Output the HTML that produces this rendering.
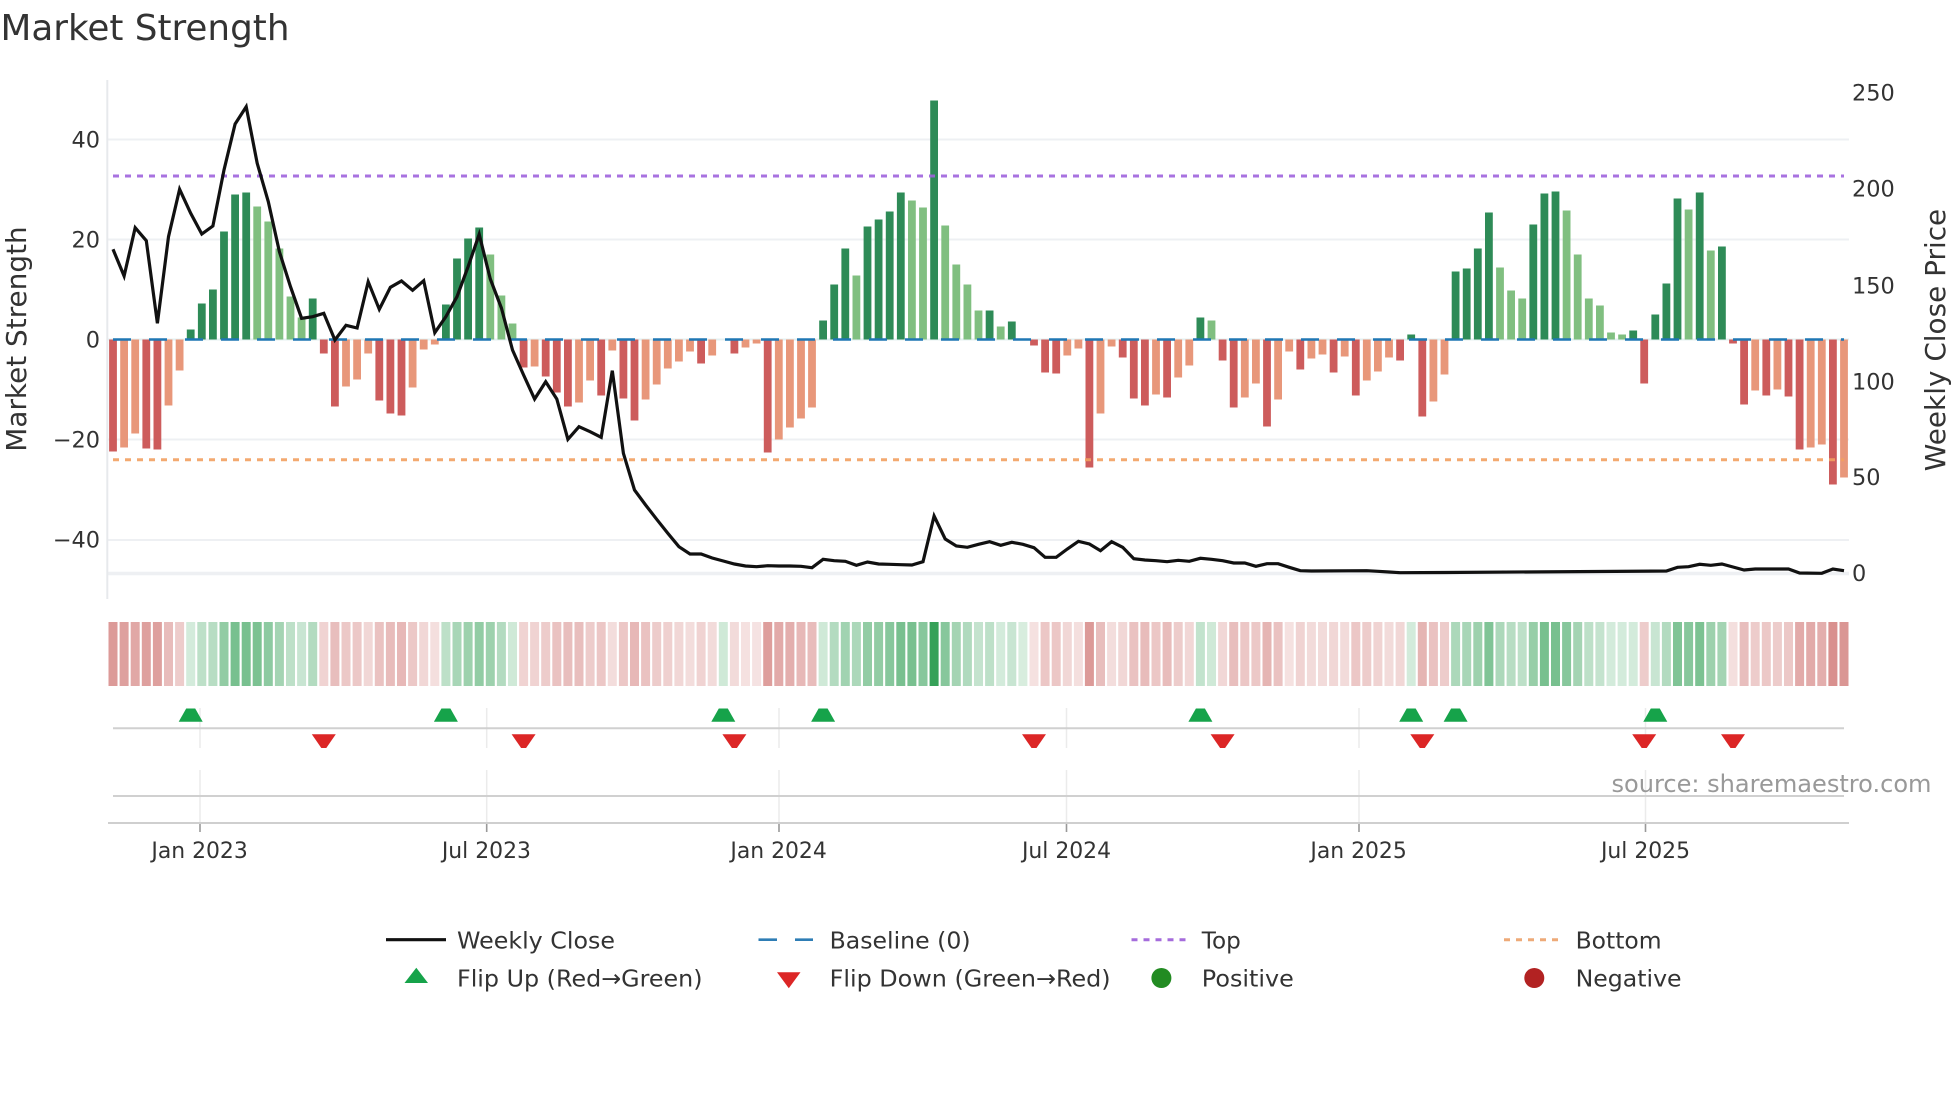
<!DOCTYPE html>
<html>
<head>
<meta charset="utf-8">
<title>Market Strength</title>
<style>
html,body{margin:0;padding:0;background:#fff;width:1960px;height:1102px;overflow:hidden}
svg{display:block}
text{font-family:"DejaVu Sans","Liberation Sans",sans-serif;fill:#333}
</style>
</head>
<body>
<svg width="1960" height="1102" viewBox="0 0 1960 1102" xmlns="http://www.w3.org/2000/svg">
<rect width="1960" height="1102" fill="#fff"/>
<defs>
<polygon id="u" points="-12,721.7 12,721.7 4.5,708.5 -4.5,708.5" fill="#16a34a"/>
<polygon id="d" points="-12,734.3 12,734.3 2.5,748 -2.5,748" fill="#dc2626"/>
</defs>

<text x="0.5" y="40" font-size="35.5" textLength="289" lengthAdjust="spacingAndGlyphs">Market Strength</text>

<!-- grid -->
<g stroke="#eef0f3" stroke-width="2" fill="none">
<path d="M107 139.5H1849M107 239.5H1849M107 439.5H1849M107 540H1849"/>
<path d="M107 339.5H1849" stroke="#e4f0f2"/>
<path d="M107 573.5H1849" stroke-width="3.6"/>
<path d="M107.3 80V599" stroke="#e7e9ec"/>
</g>

<!-- bars -->
<g fill="none" stroke-width="7.8">
<path stroke="#2e8b57" d="M190.7 339.5v-10M201.8 339.5v-36M212.9 339.5v-50M224 339.5v-108M235.1 339.5v-145M246.2 339.5v-147M312.7 339.5v-41M445.9 339.5v-35M457 339.5v-81M468.1 339.5v-101M479.2 339.5v-112M823.1 339.5v-19M834.2 339.5v-55M845.3 339.5v-91M867.5 339.5v-113M878.6 339.5v-120M889.7 339.5v-128M900.8 339.5v-147M934.1 339.5v-239M989.6 339.5v-29M1011.8 339.5v-18M1200.4 339.5v-22M1411.2 339.5v-5M1455.6 339.5v-68M1466.7 339.5v-71M1477.8 339.5v-91M1488.9 339.5v-127M1533.3 339.5v-115M1544.4 339.5v-146M1555.5 339.5v-148M1633.2 339.5v-9M1655.3 339.5v-25M1666.4 339.5v-56M1677.5 339.5v-141M1699.7 339.5v-147M1721.9 339.5v-93"/>
<path stroke="#80bf80" d="M257.2 339.5v-133M268.3 339.5v-118M279.4 339.5v-91M290.5 339.5v-43M301.6 339.5v-22M490.3 339.5v-85M501.4 339.5v-44M512.5 339.5v-16M856.4 339.5v-64M911.9 339.5v-139M923 339.5v-132M945.2 339.5v-114M956.3 339.5v-75M967.4 339.5v-55M978.5 339.5v-29M1000.7 339.5v-13M1211.5 339.5v-19M1500 339.5v-72M1511.1 339.5v-49M1522.2 339.5v-41M1566.6 339.5v-129M1577.7 339.5v-85M1588.8 339.5v-41M1599.9 339.5v-34M1611 339.5v-7M1622.1 339.5v-5M1688.6 339.5v-130M1710.8 339.5v-89"/>
<path stroke="#cd5c5c" d="M113 339.5v112M146.3 339.5v109M157.4 339.5v110M323.8 339.5v14M334.9 339.5v67M379.3 339.5v61M390.4 339.5v74M401.5 339.5v76M523.6 339.5v28M545.7 339.5v37M556.8 339.5v53M567.9 339.5v67M601.2 339.5v56M623.4 339.5v59M634.5 339.5v81M701.1 339.5v24M734.4 339.5v14M767.7 339.5v113M1034 339.5v6M1045.1 339.5v33M1056.2 339.5v34M1089.4 339.5v128M1122.7 339.5v18M1133.8 339.5v59M1144.9 339.5v66M1167.1 339.5v58M1222.6 339.5v21M1233.7 339.5v68M1267 339.5v87M1300.3 339.5v30M1333.6 339.5v33M1355.8 339.5v56M1400.1 339.5v21M1422.3 339.5v77M1644.2 339.5v44M1733 339.5v4M1744.1 339.5v65M1766.3 339.5v56M1788.5 339.5v57M1799.6 339.5v110M1832.9 339.5v145"/>
<path stroke="#e8977a" d="M124.1 339.5v108M135.2 339.5v94M168.5 339.5v66M179.6 339.5v31M346 339.5v47M357.1 339.5v40M368.2 339.5v14M412.6 339.5v48M423.7 339.5v10M434.8 339.5v5M534.6 339.5v27M579 339.5v63M590.1 339.5v41M612.3 339.5v11M645.6 339.5v60M656.7 339.5v45M667.8 339.5v29M678.9 339.5v22M690 339.5v12M712.2 339.5v16M745.5 339.5v8M756.6 339.5v4M778.8 339.5v100M789.9 339.5v88M801 339.5v79M812 339.5v68M1067.3 339.5v16M1078.4 339.5v9M1100.5 339.5v74M1111.6 339.5v7M1156 339.5v55M1178.2 339.5v38M1189.3 339.5v26M1244.8 339.5v58M1255.9 339.5v44M1278.1 339.5v60M1289.2 339.5v12M1311.4 339.5v19M1322.5 339.5v15M1344.7 339.5v17M1366.8 339.5v41M1377.9 339.5v32M1389 339.5v18M1433.4 339.5v62M1444.5 339.5v35M1755.2 339.5v51M1777.4 339.5v50M1810.7 339.5v108M1821.8 339.5v105M1844 339.5v138"/>
</g>

<!-- reference lines -->
<path d="M113 339.5H1844" stroke="#1f77b4" stroke-width="2.5" stroke-dasharray="18 18" fill="none"/>
<path d="M113 176H1844" stroke="#9f63dd" stroke-opacity=".9" stroke-width="3" stroke-dasharray="6 6" fill="none"/>
<path d="M113 459.7H1844" stroke="#f2a060" stroke-opacity=".9" stroke-width="3" stroke-dasharray="6 6" fill="none"/>

<!-- weekly close -->
<polyline fill="none" stroke="#111" stroke-width="3.2" stroke-linejoin="miter" stroke-miterlimit="6" points="113,249.3 124.1,276 135.2,227.7 146.3,240.7 157.4,323.3 168.5,236.7 179.6,189.3 190.7,213.3 201.8,234 212.9,226 224,170 235.1,124 246.2,106.7 257.2,163.3 268.3,201.7 279.4,251.7 290.5,286.7 301.6,318.3 312.7,316.7 323.8,313.3 334.9,340 346,325.3 357.1,328 368.2,281.7 379.3,309.3 390.4,287.3 401.5,281 412.6,290.3 423.7,280.7 434.8,332.7 445.9,316.7 457,296.7 468.1,266.7 479.2,234.3 490.3,279 501.4,308 512.5,350 523.6,375 534.6,399 545.7,381.7 556.8,399 567.9,439.3 579,426.7 590.1,431.7 601.2,437.3 612.3,370.7 623.4,453.3 634.5,490 645.6,505 656.7,519.3 667.8,533.3 678.9,546.7 690,554 701.1,554 712.2,558 723.3,561 734.4,564 745.5,566 756.6,566.7 767.7,565.7 778.8,566 789.9,566 801,566.3 812,567.7 823.1,559.3 834.2,560.7 845.3,561.3 856.4,565.3 867.5,562 878.6,564 889.7,564.3 900.8,564.7 911.9,565 923,561.7 934.1,516 945.2,539 956.3,546 967.4,547.3 978.5,544.3 989.6,541.7 1000.7,545.3 1011.8,542.3 1022.9,544.3 1034,547.7 1045.1,557.3 1056.2,557.3 1067.3,549 1078.4,541.3 1089.4,544 1100.5,550.7 1111.6,541.7 1122.7,547.3 1133.8,558.7 1144.9,560 1156,560.7 1167.1,561.7 1178.2,560.3 1189.3,561.3 1200.4,558.3 1211.5,559.3 1222.6,560.7 1233.7,563 1244.8,563 1255.9,566.3 1267,563.7 1278.1,563.7 1289.2,567.3 1300.3,570.7 1311.4,571 1366.8,570.7 1377.9,571.3 1389,572 1400.1,572.7 1444.5,572.5 1666.4,571 1677.5,567.3 1688.6,566.7 1699.7,564.3 1710.8,565.3 1721.9,564 1733,567 1744.1,570 1755.2,569 1788.5,569 1799.6,573 1821.8,573.3 1832.9,569 1844,570.7"/>

<!-- heat strip -->
<g fill="none" stroke-width="9">
<g stroke="#b93531">
<path d="M113 622v64" opacity=".5"/><path d="M124.1 622v64" opacity=".47"/><path d="M135.2 622v64" opacity=".43"/><path d="M146.3 622v64" opacity=".47"/><path d="M157.4 622v64" opacity=".47"/><path d="M168.5 622v64" opacity=".33"/><path d="M179.6 622v64" opacity=".25"/>
<path d="M323.8 622v64" opacity=".22"/><path d="M334.9 622v64" opacity=".32"/><path d="M346 622v64" opacity=".27"/><path d="M357.1 622v64" opacity=".27"/><path d="M368.2 622v64" opacity=".2"/><path d="M379.3 622v64" opacity=".3"/><path d="M390.4 622v64" opacity=".33"/><path d="M401.5 622v64" opacity=".35"/><path d="M412.6 622v64" opacity=".27"/><path d="M423.7 622v64" opacity=".2"/><path d="M434.8 622v64" opacity=".16"/>
<path d="M523.6 622v64" opacity=".22"/><path d="M534.6 622v64" opacity=".22"/><path d="M545.7 622v64" opacity=".25"/><path d="M556.8 622v64" opacity=".3"/><path d="M567.9 622v64" opacity=".32"/><path d="M579 622v64" opacity=".32"/><path d="M590.1 622v64" opacity=".25"/><path d="M601.2 622v64" opacity=".28"/><path d="M612.3 622v64" opacity=".17"/><path d="M623.4 622v64" opacity=".28"/><path d="M634.5 622v64" opacity=".35"/><path d="M645.6 622v64" opacity=".3"/><path d="M656.7 622v64" opacity=".25"/><path d="M667.8 622v64" opacity=".23"/><path d="M678.9 622v64" opacity=".2"/><path d="M690 622v64" opacity=".17"/><path d="M701.1 622v64" opacity=".22"/><path d="M712.2 622v64" opacity=".18"/>
<path d="M734.4 622v64" opacity=".18"/><path d="M745.5 622v64" opacity=".15"/><path d="M756.6 622v64" opacity=".14"/><path d="M767.7 622v64" opacity=".48"/><path d="M778.8 622v64" opacity=".42"/><path d="M789.9 622v64" opacity=".4"/><path d="M801 622v64" opacity=".35"/><path d="M812 622v64" opacity=".33"/>
<path d="M1034 622v64" opacity=".15"/><path d="M1045.1 622v64" opacity=".28"/><path d="M1056.2 622v64" opacity=".28"/><path d="M1067.3 622v64" opacity=".2"/><path d="M1078.4 622v64" opacity=".16"/><path d="M1089.4 622v64" opacity=".5"/><path d="M1100.5 622v64" opacity=".32"/><path d="M1111.6 622v64" opacity=".17"/><path d="M1122.7 622v64" opacity=".2"/><path d="M1133.8 622v64" opacity=".3"/><path d="M1144.9 622v64" opacity=".33"/><path d="M1156 622v64" opacity=".28"/><path d="M1167.1 622v64" opacity=".33"/><path d="M1178.2 622v64" opacity=".25"/><path d="M1189.3 622v64" opacity=".2"/>
<path d="M1222.6 622v64" opacity=".2"/><path d="M1233.7 622v64" opacity=".32"/><path d="M1244.8 622v64" opacity=".28"/><path d="M1255.9 622v64" opacity=".27"/><path d="M1267 622v64" opacity=".37"/><path d="M1278.1 622v64" opacity=".3"/><path d="M1289.2 622v64" opacity=".15"/><path d="M1300.3 622v64" opacity=".22"/><path d="M1311.4 622v64" opacity=".18"/><path d="M1322.5 622v64" opacity=".18"/><path d="M1333.6 622v64" opacity=".2"/><path d="M1344.7 622v64" opacity=".18"/><path d="M1355.8 622v64" opacity=".28"/><path d="M1366.8 622v64" opacity=".25"/><path d="M1377.9 622v64" opacity=".22"/><path d="M1389 622v64" opacity=".18"/><path d="M1400.1 622v64" opacity=".2"/>
<path d="M1422.3 622v64" opacity=".37"/><path d="M1433.4 622v64" opacity=".3"/><path d="M1444.5 622v64" opacity=".25"/><path d="M1644.2 622v64" opacity=".25"/>
<path d="M1733 622v64" opacity=".16"/><path d="M1744.1 622v64" opacity=".32"/><path d="M1755.2 622v64" opacity=".25"/><path d="M1766.3 622v64" opacity=".27"/><path d="M1777.4 622v64" opacity=".25"/><path d="M1788.5 622v64" opacity=".27"/><path d="M1799.6 622v64" opacity=".42"/><path d="M1810.7 622v64" opacity=".42"/><path d="M1821.8 622v64" opacity=".4"/><path d="M1832.9 622v64" opacity=".55"/><path d="M1844 622v64" opacity=".52"/>
</g>
<g stroke="#25994a">
<path d="M190.7 622v64" opacity=".2"/><path d="M201.8 622v64" opacity=".3"/><path d="M212.9 622v64" opacity=".33"/><path d="M224 622v64" opacity=".5"/><path d="M235.1 622v64" opacity=".62"/><path d="M246.2 622v64" opacity=".62"/><path d="M257.2 622v64" opacity=".6"/><path d="M268.3 622v64" opacity=".52"/><path d="M279.4 622v64" opacity=".42"/><path d="M290.5 622v64" opacity=".3"/><path d="M301.6 622v64" opacity=".25"/><path d="M312.7 622v64" opacity=".35"/>
<path d="M445.9 622v64" opacity=".3"/><path d="M457 622v64" opacity=".4"/><path d="M468.1 622v64" opacity=".45"/><path d="M479.2 622v64" opacity=".5"/><path d="M490.3 622v64" opacity=".45"/><path d="M501.4 622v64" opacity=".35"/><path d="M512.5 622v64" opacity=".22"/><path d="M723.3 622v64" opacity=".22"/>
<path d="M823.1 622v64" opacity=".22"/><path d="M834.2 622v64" opacity=".35"/><path d="M845.3 622v64" opacity=".43"/><path d="M856.4 622v64" opacity=".38"/><path d="M867.5 622v64" opacity=".5"/><path d="M878.6 622v64" opacity=".5"/><path d="M889.7 622v64" opacity=".55"/><path d="M900.8 622v64" opacity=".62"/><path d="M911.9 622v64" opacity=".62"/><path d="M923 622v64" opacity=".55"/><path d="M934.1 622v64" opacity=".92"/><path d="M945.2 622v64" opacity=".55"/><path d="M956.3 622v64" opacity=".42"/><path d="M967.4 622v64" opacity=".36"/><path d="M978.5 622v64" opacity=".27"/><path d="M989.6 622v64" opacity=".3"/><path d="M1000.7 622v64" opacity=".2"/><path d="M1011.8 622v64" opacity=".25"/><path d="M1022.9 622v64" opacity=".18"/>
<path d="M1200.4 622v64" opacity=".28"/><path d="M1211.5 622v64" opacity=".22"/><path d="M1411.2 622v64" opacity=".2"/>
<path d="M1455.6 622v64" opacity=".38"/><path d="M1466.7 622v64" opacity=".4"/><path d="M1477.8 622v64" opacity=".45"/><path d="M1488.9 622v64" opacity=".58"/><path d="M1500 622v64" opacity=".38"/><path d="M1511.1 622v64" opacity=".33"/><path d="M1522.2 622v64" opacity=".3"/><path d="M1533.3 622v64" opacity=".48"/><path d="M1544.4 622v64" opacity=".62"/><path d="M1555.5 622v64" opacity=".62"/><path d="M1566.6 622v64" opacity=".55"/><path d="M1577.7 622v64" opacity=".42"/><path d="M1588.8 622v64" opacity=".3"/><path d="M1599.9 622v64" opacity=".27"/><path d="M1611 622v64" opacity=".2"/><path d="M1622.1 622v64" opacity=".2"/><path d="M1633.2 622v64" opacity=".2"/>
<path d="M1655.3 622v64" opacity=".25"/><path d="M1666.4 622v64" opacity=".35"/><path d="M1677.5 622v64" opacity=".58"/><path d="M1688.6 622v64" opacity=".55"/><path d="M1699.7 622v64" opacity=".6"/><path d="M1710.8 622v64" opacity=".45"/><path d="M1721.9 622v64" opacity=".42"/>
</g>
</g>

<!-- flip panel -->
<g fill="none" stroke="#ebebeb" stroke-width="1.5">
<path d="M200 708V748M200 770V823M486.7 708V748M486.7 770V823M779 708V748M779 770V823M1066.5 708V748M1066.5 770V823M1359 708V748M1359 770V823M1645.5 708V748M1645.5 770V823"/>
</g>
<path d="M113 728.3H1844M113 796H1844" stroke="#d0d0d0" stroke-width="2" fill="none"/>
<path d="M108 823H1849" stroke="#cfcfcf" stroke-width="2" fill="none"/>
<path d="M200 824V832M486.7 824V832M779 824V832M1066.5 824V832M1359 824V832M1645.5 824V832" stroke="#999" stroke-width="1.6" fill="none"/>
<use href="#u" x="190.7"/><use href="#u" x="445.9"/><use href="#u" x="723.3"/><use href="#u" x="823.1"/><use href="#u" x="1200.4"/><use href="#u" x="1411.2"/><use href="#u" x="1455.6"/><use href="#u" x="1655.3"/>
<use href="#d" x="323.8"/><use href="#d" x="523.6"/><use href="#d" x="734.4"/><use href="#d" x="1034"/><use href="#d" x="1222.6"/><use href="#d" x="1422.3"/><use href="#d" x="1644.2"/><use href="#d" x="1733"/>

<text x="1611.5" y="792" font-size="23.9" textLength="320" lengthAdjust="spacingAndGlyphs" style="fill:#999">source: sharemaestro.com</text>

<!-- left ticks -->
<g font-size="22.4" text-anchor="end">
<text x="100" y="147.7">40</text>
<text x="100" y="247.5">20</text>
<text x="100" y="347.5">0</text>
<text x="100" y="447.5">−20</text>
<text x="100" y="547.5">−40</text>
</g>
<!-- right ticks -->
<g font-size="22.4">
<text x="1852" y="100.7">250</text>
<text x="1852" y="196.7">200</text>
<text x="1852" y="293.3">150</text>
<text x="1852" y="389.3">100</text>
<text x="1852" y="485">50</text>
<text x="1852" y="581">0</text>
</g>
<!-- axis titles -->
<text transform="translate(26,339) rotate(-90)" text-anchor="middle" font-size="27.9">Market Strength</text>
<text transform="translate(1945,340) rotate(-90)" text-anchor="middle" font-size="27.9">Weekly Close Price</text>

<!-- x labels -->
<g font-size="21.9" text-anchor="middle">
<text x="199.6" y="858">Jan 2023</text>
<text x="486.4" y="858">Jul 2023</text>
<text x="778.6" y="858">Jan 2024</text>
<text x="1066.5" y="858">Jul 2024</text>
<text x="1358.6" y="858">Jan 2025</text>
<text x="1645.5" y="858">Jul 2025</text>
</g>

<!-- legend -->
<path d="M386 939.7H446" stroke="#111" stroke-width="3.2" fill="none"/>
<path d="M758.5 939.7H777M795 939.7H813" stroke="#2e7db5" stroke-width="2.6" fill="none"/>
<path d="M1131.5 939.7H1186" stroke="#a56cdc" stroke-width="3" stroke-dasharray="6 6" fill="none"/>
<path d="M1504 939.7H1559" stroke="#eeaa78" stroke-width="3" stroke-dasharray="6 6" fill="none"/>
<polygon points="416.3,967.7 428,983 404.5,983" fill="#16a34a"/>
<polygon points="777,972.3 800.5,972.3 788.8,988.3" fill="#dc2626"/>
<circle cx="1161.4" cy="978" r="10" fill="#228b22"/>
<circle cx="1534.3" cy="978" r="10" fill="#b22222"/>
<g font-size="23.5">
<text x="457" y="948.3" textLength="158" lengthAdjust="spacingAndGlyphs">Weekly Close</text>
<text x="457" y="986.7" textLength="245.5" lengthAdjust="spacingAndGlyphs">Flip Up (Red→Green)</text>
<text x="829.6" y="948.3" textLength="141" lengthAdjust="spacingAndGlyphs">Baseline (0)</text>
<text x="829.6" y="986.7" textLength="281" lengthAdjust="spacingAndGlyphs">Flip Down (Green→Red)</text>
<text x="1201.8" y="948.3" textLength="39" lengthAdjust="spacingAndGlyphs">Top</text>
<text x="1201.8" y="986.7" textLength="92" lengthAdjust="spacingAndGlyphs">Positive</text>
<text x="1575.6" y="948.3" textLength="86" lengthAdjust="spacingAndGlyphs">Bottom</text>
<text x="1575.6" y="986.7" textLength="106" lengthAdjust="spacingAndGlyphs">Negative</text>
</g>
</svg>
</body>
</html>
